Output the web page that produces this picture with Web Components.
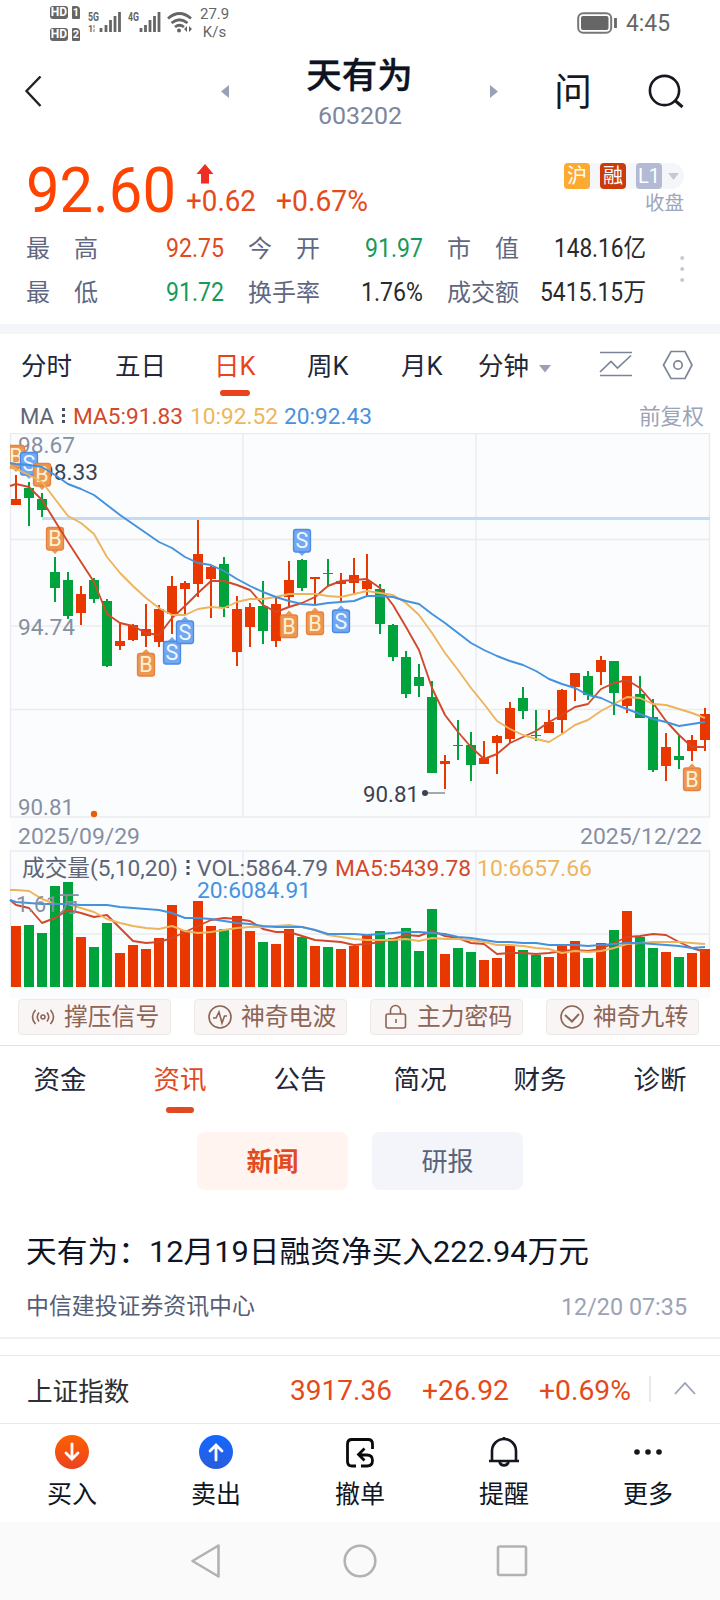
<!DOCTYPE html>
<html lang="zh-CN">
<head>
<meta charset="utf-8">
<title>天有为 603202</title>
<style>
  body {
    margin: 0;
    width: 720px;
    height: 1600px;
    overflow: hidden;
    background: #fff;
    font-family: Roboto, "Noto Sans CJK SC", sans-serif;
    color: #1d2433;
  }
</style>
</head>
<body>
<stock-page></stock-page>

<script>
// Text squeezed or stretched to a set advance width.
class FitText extends HTMLElement {
  constructor() {
    super();
    this.attachShadow({ mode: 'open' });
    this.shadowRoot.innerHTML = `
      <style>
        :host { display: inline-block; white-space: nowrap; flex: none; }
        span { display: inline-block; transform-origin: 0 50%; }
      </style>
      <span><slot></slot></span>
    `;
  }

  connectedCallback() {
    const span = this.shadowRoot.querySelector('span');
    const width = Number(this.getAttribute('w'));
    const natural = span.getBoundingClientRect().width;
    if (!natural) return;
    span.style.transform = `scaleX(${width / natural})`;
    this.style.width = width + 'px';
  }
}

class StatusBar extends HTMLElement {
  constructor() {
    super();
    this.attachShadow({ mode: 'open' });
    this.shadowRoot.innerHTML = `
      <style>
        :host { display: flex; height: 44px; padding: 0 50px; box-sizing: border-box; color: #666; }
        .sims { display: flex; flex-direction: column; gap: 9px; padding-top: 6px; width: 37px; }
        .sim { display: flex; gap: 4px; height: 13px; font-size: 12px; font-weight: 700; line-height: 13.500px; color: #fff; }
        .sim b { width: 18px; background: #666; border-radius: 3px; text-align: center; font-weight: 700; }
        .sim i { width: 8px; background: #666; border-radius: 1px 4px 1px 1px; font-style: normal; font-size: 11px; text-align: center; }
        svg { display: block; flex: none; }
        .speed { font-size: 15px; line-height: 18px; padding-top: 5px; text-align: center; width: 29px; margin-left: 5px; }
        .right { margin-left: auto; display: flex; gap: 7px; align-items: center; padding-top: 2px; }
        .time { font-size: 23px; }
      </style>
      <div class="sims">
        <div class="sim"><b>HD</b><i>1</i></div>
        <div class="sim"><b>HD</b><i>2</i></div>
      </div>
      <svg width="108" height="44" viewBox="87 0 108 44" fill="#666" font-size="12.500" font-weight="700">
        <text x="88" y="20.500" textLength="11" lengthAdjust="spacingAndGlyphs">5G</text>
        <text x="88" y="32" font-size="9">1</text>
        <path d="M94 25v3M94 29v3" stroke="#bbb" stroke-width="2"/>
        <path d="M101 28v4M106 25v7M110.500 20v12M115 16v16M119.500 12v20" stroke="#666" stroke-width="2.800"/>
        <text x="128" y="20.500" textLength="11" lengthAdjust="spacingAndGlyphs">4G</text>
        <path d="M141 28v4M145.500 25v7M150 20v12M154.500 16v16M159 12v20" stroke="#666" stroke-width="2.800"/>
        <g fill="none" stroke="#666" stroke-width="2.800">
          <path d="M168 18.500q11.500-10 23 0M171.500 23q8-6.500 16 0M175 27q4.500-3.500 9 0"/>
        </g>
        <circle cx="179" cy="30.500" r="2"/>
        <path d="M187 26v6l-3-3zM189 26v6l3-3z"/>
      </svg>
      <div class="speed">27.9<br>K/s</div>
      <div class="right">
        <svg width="42" height="22" viewBox="0 0 42 22">
          <rect x="1.200" y="1.200" width="33" height="19.500" rx="5" fill="none" stroke="#777" stroke-width="2"/>
          <rect x="4" y="4" width="27.500" height="14" rx="2" fill="#666"/>
          <path d="M38.500 6v10" stroke="#666" stroke-width="2.800"/>
        </svg>
        <fit-text class="time" w="44">4:45</fit-text>
      </div>
    `;
  }
}

class StockHeader extends HTMLElement {
  constructor() {
    super();
    this.attachShadow({ mode: 'open' });
    this.shadowRoot.innerHTML = `
      <style>
        :host { display: grid; grid-template-columns: 221px 277px 1fr; height: 95px; box-sizing: border-box; }
        .back { padding: 32px 0 0 24px; }
        svg { display: block; }
        .mid { display: flex; justify-content: space-between; }
        .mid > svg { margin-top: 41px; }
        .name { text-align: center; font-size: 35.500px; font-weight: 500; line-height: 36px; color: #0e1322; padding-top: 14px; -webkit-text-stroke: .3px; }
        .code { text-align: center; font-size: 24.500px; line-height: 28px; color: #7d869c; padding-top: 8px; }
        .tools { display: flex; padding: 28px 0 0 56px; }
        .ask { font-size: 38px; line-height: 40px; color: #16191f; width: 38px; }
        .tools svg { margin: 1px 0 0 56px; }
      </style>
      <div class="back">
        <svg width="20" height="32" viewBox="0 0 20 32" fill="none" stroke="#222" stroke-width="2.400"><path d="M16.500 .5L2.500 15L16.500 30"/></svg>
      </div>
      <div class="mid">
        <svg width="8" height="13"><path d="M8 0v13L0 6.500z" fill="#99a1b8"/></svg>
        <div>
          <div class="name">天有为</div>
          <div class="code"><fit-text w="84">603202</fit-text></div>
        </div>
        <svg width="8" height="13"><path d="M0 0v13L8 6.500z" fill="#99a1b8"/></svg>
      </div>
      <div class="tools">
        <div class="ask">问</div>
        <svg width="40" height="36" viewBox="0 0 40 36" fill="none" stroke="#16191f" stroke-width="2.600"><circle cx="16.500" cy="17.500" r="14.600"/><path d="M27 27.500l7.500 6.500" stroke-width="3"/></svg>
      </div>
    `;
  }
}

class StockQuote extends HTMLElement {
  constructor() {
    super();
    this.attachShadow({ mode: 'open' });
    this.shadowRoot.innerHTML = `
      <style>
        :host { display: block; height: 185px; border-bottom: 10px solid #f4f5f9; position: relative; }
        .top { display: flex; height: 85px; padding-left: 26px; }
        .price { font-size: 63px; line-height: 74px; color: #ff4300; padding-top: 15px; }
        .change { margin-left: 10px; color: #e64a19; font-size: 29px; line-height: 34px; }
        .change svg { display: block; margin: 25px 0 0 10px; }
        .change div { display: flex; gap: 20px; }
        .tags { margin: 24px 36px 0 auto; text-align: right; }
        .tagrow { display: flex; gap: 10px; background: #f5f6f9; border-radius: 5px 13px 13px 5px; width: 120px; height: 26px; }
        .tagrow b { width: 26px; height: 26px; border-radius: 4px; font-weight: 400; font-size: 20px; line-height: 26px; text-align: center; color: #fff; }
        .tagrow svg { margin: 10px 0 0 -4px; }
        .state { font-size: 19.500px; line-height: 26px; color: #9ea6ba; padding-top: 2px; }
        .stats { display: grid; grid-template-columns: 72px 126px 96px 103px 96px 127px; row-gap: 0; padding: 3px 0 0 26px; line-height: 44px; font-size: 25px; }
        .stats > * { height: 44px; white-space: nowrap; }
        .l { color: #5f6880; font-size: 24px; display: flex; justify-content: space-between; }
        .v { text-align: right; color: #2a2a2e; }
        .g { margin-left: 24px; }
        .up { color: #e04a1c; }
        .down { color: #159a5c; }
        .more { position: absolute; left: 680px; top: 116px; }
      </style>
      <div class="top">
        <fit-text class="price" w="150">92.60</fit-text>
        <div class="change">
          <svg width="18" height="20"><path d="M9 0L17.500 10H13V19.500H5V10H.5z" fill="#ee2e20"/></svg>
          <div><fit-text w="70">+0.62</fit-text><fit-text w="92">+0.67%</fit-text></div>
        </div>
        <div class="tags">
          <div class="tagrow">
            <b style="background:#fdaa30">沪</b><b style="background:#cc3a0c">融</b><b style="background:#b2bad5">L1</b>
            <svg width="11" height="7"><path d="M0 0h11L5.500 7z" fill="#c5c9d3"/></svg>
          </div>
          <div class="state">收盘</div>
        </div>
      </div>
      <div class="stats">
        <div class="l"><span>最</span><span>高</span></div><div class="v up"><fit-text w="58">92.75</fit-text></div>
        <div class="l g"><span>今</span><span>开</span></div><div class="v down"><fit-text w="58">91.97</fit-text></div>
        <div class="l g"><span>市</span><span>值</span></div><div class="v"><fit-text w="92">148.16亿</fit-text></div>
        <div class="l"><span>最</span><span>低</span></div><div class="v down"><fit-text w="58">91.72</fit-text></div>
        <div class="l g">换手率</div><div class="v"><fit-text w="62">1.76%</fit-text></div>
        <div class="l g">成交额</div><div class="v"><fit-text w="106">5415.15万</fit-text></div>
      </div>
      <svg class="more" width="5" height="30" fill="#c3cad8"><circle cx="2.200" cy="3" r="2"/><circle cx="2.200" cy="14" r="2"/><circle cx="2.200" cy="25" r="2"/></svg>
    `;
  }
}

class PeriodTabs extends HTMLElement {
  constructor() {
    super();
    this.attachShadow({ mode: 'open' });
    this.shadowRoot.innerHTML = `
      <style>
        :host { display: flex; height: 66px; padding-left: 21px; font-size: 25.500px; line-height: 65px; color: #1f2739; }
        span { white-space: nowrap; width: 94px; flex: none; }
        .on { color: #e8431c; width: 93px; }
        .on i { display: block; width: 30px; height: 6px; border-radius: 3px; background: #e8431c; margin: -9px 0 0 6px; }
        svg { flex: none; }
      </style>
      <span>分时</span><span style="width:99px">五日</span><span class="on">日K<i></i></span>
      <span style="width:94px">周K</span><span style="width:77px">月K</span><span style="width:61px">分钟</span>
      <svg width="12" height="8" style="margin-top:31px"><path d="M0 0h12L6 7.500z" fill="#99a1b5"/></svg>
      <svg width="34" height="28" viewBox="0 0 34 28" style="margin:16px 0 0 48px" fill="none" stroke="#7c8598" stroke-width="1.700"><path d="M1 2.500h32M1 25.500h32M1 22L12 11.500L18.500 18L32 5.500"/></svg>
      <svg width="34" height="30" viewBox="0 0 34 30" style="margin:16px 0 0 29px" fill="none" stroke="#7c8598" stroke-width="1.700"><path d="M9 1.500h14L30 15L23 28.500H9L1.500 15z"/><circle cx="16" cy="15" r="4.200"/></svg>
    `;
  }
}

class MaLegend extends HTMLElement {
  constructor() {
    super();
    this.attachShadow({ mode: 'open' });
    this.shadowRoot.innerHTML = `
      <style>
        :host { display: flex; height: 33px; padding: 0 16px 0 20px; line-height: 33px; font-size: 22.500px; color: #5d6577; }
        svg { margin: 8px 8px 0 8px; flex: none; }
        .adj { margin-left: auto; font-size: 21.700px; color: #9ba3b6; }
      </style>
      <fit-text w="34">MA</fit-text>
      <svg width="4" height="18" fill="#4a5163"><path d="M0 0h3v3H0zM0 6h3v3H0zM0 12h3v3H0z"/></svg>
      <fit-text w="110" style="color:#d3492a;margin-left:-1px">MA5:91.83</fit-text>
      <fit-text w="88" style="color:#edb65d;margin-left:7px">10:92.52</fit-text>
      <fit-text w="88" style="color:#4792df;margin-left:6px">20:92.43</fit-text>
      <span class="adj">前复权</span>
    `;
  }
}

// [colour, high, low, body top, body bottom, volume top]
const CANDLES = [
  ['r',475,505,499,505,926],['g',482,526,488,498,925],['g',493,517,499,510,933],['g',557,602,572,588,886],
  ['g',572,619,580,616,882],['r',586,625,594,613,937],['g',578,603,580,599,947],['g',599,667,601,666,923],
  ['r',623,650,641,646,953],['r',624,641,625,640,945],['r',604,647,629,636,949],['r',605,647,609,642,938],
  ['r',576,634,586,614,905],['r',581,615,583,589,930],['r',520,597,554,584,901],['r',566,618,567,579,926],
  ['g',557,617,564,608,929],['r',596,666,609,652,916],['r',603,647,607,627,931],['g',581,644,606,631,942],
  ['r',598,647,604,641,944],['r',561,606,580,597,929],['g',559,591,560,588,937],['r',577,604,577,579,946],
  ['g',559,586,573,574,947],['r',573,601,581,584,949],['r',558,594,575,583,946],['r',554,596,581,589,935],
  ['g',584,634,589,624,931],['g',624,661,625,657,938],['g',651,698,657,694,928],['g',664,697,677,686,951],
  ['g',681,773,697,773,909],['r',755,789,761,764,954],['g',720,760,745,746,948],['g',732,781,745,765,952],
  ['r',741,764,758,764,960],['r',735,774,736,743,958],['r',702,743,708,739,946],['g',687,719,698,711,950],
  ['g',710,741,735,736,955],['r',710,733,722,733,957],['r',689,733,690,720,946],['r',673,701,673,687,941],
  ['g',671,700,676,695,958],['r',656,685,660,672,943],['g',661,715,661,693,930],['r',676,713,676,706,911],
  ['g',676,718,694,718,937],['g',699,772,717,770,948],['r',733,781,747,766,952],['g',735,769,756,760,957],
  ['r',735,761,740,751,953],['r',708,751,714,740,949]
];

// first value sits on the left frame, the rest on the candles
const PRICE_LINES = {
  '#d1492a': [486,484,487,500,521,542,562,582,614,623,626,633,635,618,606,593,581,581,585,590,605,612,607,603,597,586,581,580,579,588,605,627,650,688,715,732,747,759,754,743,737,731,722,715,707,704,689,683,680,688,703,721,735,747,747],
  '#eeb45c': [466,469,475,482,499,516,523,534,557,573,586,598,608,615,615,609,607,608,602,599,599,597,594,594,594,596,597,594,591,593,595,603,615,633,653,670,688,704,721,729,735,739,742,734,725,720,711,704,697,698,704,705,709,713,718],
  '#4292de': [463,464,465,467,475,484,489,495,505,515,524,533,542,548,557,563,565,571,579,586,592,597,601,604,605,603,602,601,596,596,597,601,604,614,623,633,643,650,656,661,665,671,679,684,688,695,698,704,709,714,719,722,726,724,722]
};

const VOLUME_LINES = {
  '#d1492a': [900,905,908,923,918,910,913,917,915,928,941,943,942,938,932,926,920,918,919,921,929,932,932,936,940,941,942,945,944,942,939,935,936,931,936,938,943,944,954,953,953,954,953,951,950,951,949,943,937,936,934,935,942,948,952],
  '#eeb45c': [890,890,891,899,904,904,908,912,919,923,926,928,929,926,931,933,932,930,928,927,927,926,925,927,930,935,937,939,940,940,940,939,941,938,939,939,940,942,945,945,946,948,949,953,951,952,951,948,944,943,942,942,942,943,944],
  '#4292de': [900,902,903,904,904,904,905,905,905,907,908,909,910,913,918,918,919,921,923,924,926,927,927,927,930,934,934,934,935,934,933,932,932,933,934,937,938,940,942,942,943,943,945,945,945,946,945,944,943,943,944,945,946,948,947]
};

// [candle index, letter, box top, pointer direction]
const TRADES = [
  [0,'B',445,'down'],[1,'S',452,'down'],[2,'B',463,'down'],[3,'B',527,'down'],[22,'S',529,'down'],
  [10,'B',653,'up'],[12,'S',641,'up'],[13,'S',620.500,'up'],[21,'B',614.500,'up'],[23,'B',611.500,'up'],[25,'S',609.500,'up'],[52,'B',767.500,'up']
];

const candleX = i => 16 + 13 * i;
const COLORS = { r: '#e83800', g: '#00a33b' };

class KlineChart extends HTMLElement {
  constructor() {
    super();
    this.attachShadow({ mode: 'open' });
    this.shadowRoot.innerHTML = `
      <style>
        :host { display: block; height: 566px; }
        svg { display: block; }
        .grid { stroke: #eaebee; stroke-width: 1.400; fill: none; }
      </style>
      <svg width="720" height="566" viewBox="0 433 720 566" font-size="22.500">
        <clipPath id="plot"><rect x="10" y="433" width="700" height="566"/></clipPath>
        <rect x="10" y="433" width="700" height="566" fill="#fbfcfe"/>
        <path class="grid" d="M10 433.500H710M10 539.500H710M10 626H710M10 709.500H710M10 817H710M10 851H710M10 934H710M10.500 433V817M709.500 433V817M243 433V817M476 433V817M10.500 851V987M709.500 851V987M243 851V987M476 851V987"/>
        <path d="M42 518.500H710" stroke="#c3dbf5" stroke-width="3"/>
        ${this.text('98.67', 18, 453, 57, '#878fa2')}
        ${this.text('94.74', 18, 635, 57, '#878fa2')}
        ${this.text('90.81', 18, 815, 56, '#878fa2')}
        ${this.text('98.33', 41, 480, 57, '#3b4252')}
        ${CANDLES.map((c, i) => this.candle(c, i)).join('')}
        <g clip-path="url(#plot)">${TRADES.map(t => this.trade(t)).join('')}</g>
        ${this.lines(PRICE_LINES)}
        ${this.text('90.81', 363, 801.5, 56, '#3b4252')}
        <path d="M425 793H445" stroke="#8d939e" stroke-width="1.600"/>
        <circle cx="425" cy="793" r="3" fill="#3b4252"/>
        <circle cx="94" cy="814" r="3.200" fill="#ea5c0b"/>
        ${this.text('2025/09/29', 18, 843.5, 122, '#878fa2')}
        ${this.text('2025/12/22', 580, 843.5, 122, '#878fa2')}
        ${this.text('成交量(5,10,20)', 22, 875.5, 156, '#5d6577')}
        <path d="M186.500 860h3v3h-3zM186.500 866h3v3h-3zM186.500 872h3v3h-3z" fill="#4a5163"/>
        ${this.text('VOL:5864.79', 197, 875.5, 131, '#5d6577')}
        ${this.text('MA5:5439.78', 335, 875.5, 136, '#d3492a')}
        ${this.text('10:6657.66', 477, 875.5, 115, '#edb65d')}
        ${this.text('20:6084.91', 197, 898, 114, '#4792df')}
        ${this.lines(VOLUME_LINES)}
        ${this.text('1.61万', 16, 912, 64, '#878fa2')}
      </svg>
    `;
  }

  text(s, x, y, w, fill) {
    return `<text x="${x}" y="${y}" textLength="${w}" lengthAdjust="spacingAndGlyphs" fill="${fill}">${s}</text>`;
  }

  candle([c, high, low, top, bottom, vol], i) {
    const x = candleX(i);
    return `<g fill="${COLORS[c]}">
      <rect x="${x - 1}" y="${high}" width="2" height="${low - high}"/>
      <rect x="${x - 5}" y="${top}" width="10" height="${bottom - top}"/>
      <rect x="${x - 5}" y="${vol}" width="10" height="${987 - vol}"/>
    </g>`;
  }

  trade([i, letter, y, dir]) {
    const x = candleX(i);
    const buy = letter === 'B';
    const tip = dir === 'down' ? `M${x - 4} ${y + 23}h8l-4 4z` : `M${x - 4} ${y}h8l-4 -4z`;
    return `<g fill="${buy ? '#ea9852' : '#70a8f2'}">
      <path d="${tip}"/>
      <rect x="${x - 8.5}" y="${y + .5}" width="17" height="22.500" rx="2.500" stroke="${buy ? '#ea803c' : '#4c8ae4'}" stroke-width="1.300"/>
      <text x="${x}" y="${y + 19.2}" text-anchor="middle" font-size="21.500" fill="${buy ? '#fff0d2' : '#f0f7ff'}">${letter}</text>
    </g>`;
  }

  lines(set) {
    return Object.entries(set).map(([color, ys]) => {
      const pts = ys.map((y, k) => `${k ? candleX(k - 1) : 10},${y}`).join(' ');
      return `<polyline points="${pts}" fill="none" stroke="${color}" stroke-width="1.900" stroke-linejoin="round"/>`;
    }).join('');
  }
}

class SignalBar extends HTMLElement {
  constructor() {
    super();
    this.attachShadow({ mode: 'open' });
    this.shadowRoot.innerHTML = `
      <style>
        :host { display: flex; justify-content: space-between; height: 46px; padding: 0 21px 0 18px; border-bottom: 1px solid #e2e3e5; color: #8d6455; }
        div { display: flex; width: 153px; height: 36px; box-sizing: border-box; border: 1px solid #efe8e8; border-radius: 4px; background: #f9f5f4; font-size: 23.800px; line-height: 35px; padding-left: 13px; white-space: nowrap; }
        svg { margin: 4px 9px 0 0; width: 24px; height: 26px; flex: none; fill: none; stroke: #8d6455; stroke-width: 1.600; }
      </style>
      <div style="padding-left:12px"><svg viewBox="0 0 24 26"><circle cx="12" cy="13" r="2"/><path d="M8 8.500q-3.500 4.500 0 9M16 8.500q3.500 4.500 0 9M4.500 6q-6 7 0 14M19.500 6q6 7 0 14"/></svg>撑压信号</div>
      <div><svg viewBox="0 0 24 26"><circle cx="12" cy="13" r="11"/><path d="M5 14h3l3-6l3 11l2.500-7H19"/></svg>神奇电波</div>
      <div><svg viewBox="0 0 24 26"><rect x="2" y="10" width="19.500" height="14" rx="2"/><path d="M6.500 10V6.500a5 5 0 0 1 10 0V10M12 15v4"/></svg>主力密码</div>
      <div><svg viewBox="0 0 24 26"><circle cx="12" cy="13" r="11"/><path d="M5 11l7 6.500L19 10" stroke-width="2"/></svg>神奇九转</div>
    `;
  }
}

class InfoTabs extends HTMLElement {
  constructor() {
    super();
    this.attachShadow({ mode: 'open' });
    this.shadowRoot.innerHTML = `
      <style>
        :host { display: block; height: 146px; }
        nav { display: grid; grid-template-columns: repeat(6, 1fr); height: 86px; font-size: 26.500px; line-height: 68px; text-align: center; color: #1f2739; }
        .on { color: #e04a22; }
        .on i { display: block; width: 28px; height: 6px; border-radius: 3px; background: #e04a22; margin: -7px auto 0; }
        .chips { display: flex; gap: 24px; justify-content: center; }
        .chips b { width: 151px; height: 58px; border-radius: 8px; background: #f4f5fa; color: #5a6379; font-size: 26px; line-height: 61px; font-weight: 400; text-align: center; }
        .chips .sel { background: #fff4ef; color: #e34a22; font-weight: 700; }
      </style>
      <nav><span>资金</span><span class="on">资讯<i></i></span><span>公告</span><span>简况</span><span>财务</span><span>诊断</span></nav>
      <div class="chips"><b class="sel">新闻</b><b>研报</b></div>
    `;
  }
}

class NewsItem extends HTMLElement {
  constructor() {
    super();
    this.attachShadow({ mode: 'open' });
    this.shadowRoot.innerHTML = `
      <style>
        :host { display: block; height: 147px; box-sizing: border-box; padding: 39px 33px 0 26px; border-bottom: 2px solid #f0f1f3; }
        .title { font-size: 30px; line-height: 42px; color: #0e1424; }
        .meta { display: flex; justify-content: space-between; font-size: 22.900px; line-height: 30px; color: #555e74; padding-top: 19px; }
        .date { color: #9ba3b5; font-size: 24.500px; }
      </style>
      <fit-text class="title" w="563"><slot></slot></fit-text>
      <div class="meta"><slot name="source"></slot><fit-text class="date" w="126">12/20 07:35</fit-text></div>
    `;
  }
}

class IndexBar extends HTMLElement {
  constructor() {
    super();
    this.attachShadow({ mode: 'open' });
    this.shadowRoot.innerHTML = `
      <style>
        :host { display: flex; align-items: center; height: 65px; padding: 2px 0 0 27px; margin-top: 16px; border: solid #e8e9eb; border-width: 1px 0; font-size: 28.500px; color: #e54a1a; }
        .name { font-size: 25.600px; color: #2d2f33; width: 263px; margin-top: -2px; }
        i { width: 2px; height: 26px; background: #e7e8eb; margin: -3px 23px 0 18px; }
        svg { margin-top: -4px; }
      </style>
      <span class="name">上证指数</span>
      <fit-text w="102">3917.36</fit-text>
      <fit-text w="87" style="margin-left:30px">+26.92</fit-text>
      <fit-text w="92" style="margin-left:30px">+0.69%</fit-text>
      <i></i>
      <svg width="22" height="13" fill="none" stroke="#9aa2b3" stroke-width="1.800"><path d="M1 12L11 1L21 12"/></svg>
    `;
  }
}

class TradeBar extends HTMLElement {
  constructor() {
    super();
    this.attachShadow({ mode: 'open' });
    this.shadowRoot.innerHTML = `
      <style>
        :host { display: grid; grid-template-columns: repeat(5, 1fr); height: 98px; text-align: center; font-size: 25px; line-height: 36px; color: #0f1524; }
        svg { display: block; margin: 11px auto 8px; }
      </style>
      <div>
        <svg width="34" height="34" viewBox="0 0 34 34"><defs><linearGradient id="a" x2="0" y2="1"><stop stop-color="#ff6000"/><stop offset="1" stop-color="#ea4320"/></linearGradient></defs><circle cx="17" cy="17" r="17" fill="url(#a)"/><path d="M17 9v14M11 18l6 6l6-6" fill="none" stroke="#fff" stroke-width="2.800" stroke-linecap="round"/></svg>
        买入
      </div>
      <div>
        <svg width="34" height="34" viewBox="0 0 34 34"><defs><linearGradient id="b" x2="0" y2="1"><stop stop-color="#1268ff"/><stop offset="1" stop-color="#2b5cdc"/></linearGradient></defs><circle cx="17" cy="17" r="17" fill="url(#b)"/><path d="M17 25V11M11 16l6-6l6 6" fill="none" stroke="#fff" stroke-width="2.800" stroke-linecap="round"/></svg>
        卖出
      </div>
      <div>
        <svg width="34" height="34" viewBox="0 0 34 34" fill="none" stroke="#0a0a0a" stroke-width="2.800"><path d="M13 31H9q-4.500 0-4.500-4.500V9q0-4.500 4.500-4.500H25q4.500 0 4.500 4.500V14M18 31h6q5.500 0 5.500-5.500T24 20H17M21.500 13.500L15.500 19.500L21.500 25.500"/></svg>
        撤单
      </div>
      <div>
        <svg width="34" height="34" viewBox="0 0 34 34" fill="none" stroke="#14171f" stroke-width="2.600"><path d="M2 26H32M5 26V16a12 12 0 0 1 24 0V26M12.500 27a4.700 4.700 0 0 0 9 0M17 2v2"/></svg>
        提醒
      </div>
      <div>
        <svg width="34" height="34" viewBox="0 0 34 34" fill="#14171f"><circle cx="6" cy="17" r="2.800"/><circle cx="17" cy="17" r="2.800"/><circle cx="28" cy="17" r="2.800"/></svg>
        更多
      </div>
    `;
  }
}

class SystemNav extends HTMLElement {
  constructor() {
    super();
    this.attachShadow({ mode: 'open' });
    this.shadowRoot.innerHTML = `
      <style>
        :host { display: flex; justify-content: center; align-items: center; gap: 119px; height: 78px; background: #fafafa; }
        svg { display: block; fill: none; stroke: #b2b2b2; stroke-width: 2.600; stroke-linejoin: round; }
      </style>
      <svg width="34" height="36"><path d="M28.500 2.500V33.500L2.500 18z"/></svg>
      <svg width="34" height="36"><circle cx="17" cy="18" r="15.300"/></svg>
      <svg width="34" height="36"><rect x="2" y="3.500" width="28" height="28.500" rx="1.500"/></svg>
    `;
  }
}

class StockPage extends HTMLElement {
  constructor() {
    super();
    this.attachShadow({ mode: 'open' });
    this.shadowRoot.innerHTML = `
      <style>
        :host { display: flex; flex-direction: column; width: 720px; height: 1600px; }
        :host > * { flex: none; }
      </style>
      <status-bar></status-bar>
      <stock-header></stock-header>
      <stock-quote></stock-quote>
      <period-tabs></period-tabs>
      <ma-legend></ma-legend>
      <kline-chart></kline-chart>
      <signal-bar></signal-bar>
      <info-tabs></info-tabs>
      <news-item>天有为：12月19日融资净买入222.94万元<span slot="source">中信建投证券资讯中心</span></news-item>
      <index-bar></index-bar>
      <trade-bar></trade-bar>
      <system-nav></system-nav>
    `;
  }
}

customElements.define('status-bar', StatusBar);
customElements.define('stock-header', StockHeader);
customElements.define('stock-quote', StockQuote);
customElements.define('period-tabs', PeriodTabs);
customElements.define('ma-legend', MaLegend);
customElements.define('kline-chart', KlineChart);
customElements.define('signal-bar', SignalBar);
customElements.define('info-tabs', InfoTabs);
customElements.define('news-item', NewsItem);
customElements.define('index-bar', IndexBar);
customElements.define('trade-bar', TradeBar);
customElements.define('system-nav', SystemNav);
customElements.define('stock-page', StockPage);
customElements.define('fit-text', FitText);
</script>
</body>
</html>
